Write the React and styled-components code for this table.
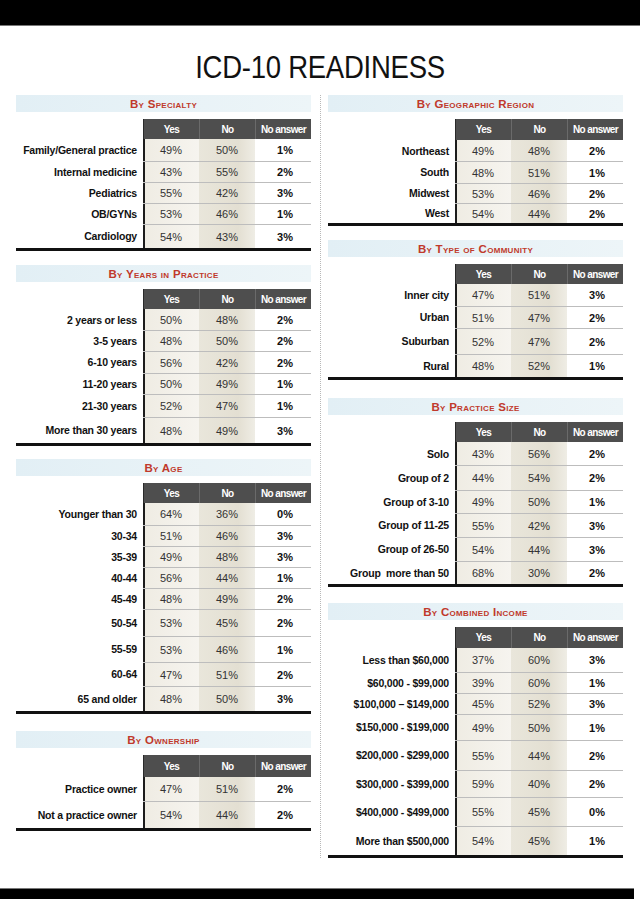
import styled, { createGlobalStyle } from 'styled-components'

const GlobalStyle = createGlobalStyle`
  body {
    margin: 0;
    background: #fff;
    font-family: "Liberation Sans", Arial, sans-serif;
  }
`

const Page = styled.div`
  width: 640px;
  height: 899px;
  display: flex;
  flex-direction: column;
  overflow: hidden;
`

const TopBar = styled.div`
  height: 25px;
  background: #000;
  border-bottom: 1px solid #777;
`

const Title = styled.h1`
  margin: 25px 0 12px;
  font-weight: 400;
  font-size: 32px;
  line-height: 32px;
  text-align: center;
  color: #111;
  letter-spacing: -0.3px;
  transform: scaleX(0.86);
`

const Columns = styled.div`
  display: flex;
  padding-left: 16px;
  align-items: stretch;
`

const Column = styled.div`
  width: 295px;
  display: flex;
  flex-direction: column;
`

const Divider = styled.div`
  width: 0;
  margin: 0 7px 0 9px;
  border-left: 1px dotted #b8b8b8;
`

const Section = styled.section`
  margin-top: ${p => p.$space}px;
`

const Band = styled.div`
  height: 17px;
  background: linear-gradient(to right, #e2eff5, #edf5f8);
  display: flex;
  align-items: center;
  justify-content: center;
  font-weight: 700;
  font-size: 11.5px;
  font-variant: small-caps;
  letter-spacing: 0.3px;
  color: #c0392b;
`

const Table = styled.div`
  margin-top: 7px;
  border-bottom: 3px solid #111;
`

const Row = styled.div`
  display: grid;
  grid-template-columns: 127px 56px 56px 56px;
  height: ${p => p.$h}px;
`

const Label = styled.div`
  display: flex;
  align-items: center;
  justify-content: flex-end;
  padding-right: 6px;
  font-weight: 700;
  font-size: 10.5px;
  letter-spacing: -0.2px;
  color: #111;
  white-space: pre;
`

const Head = styled.div`
  background: #4e4e4e;
  border-left: 1px solid ${p => (p.$first ? '#2a2a2a' : '#6a6a6a')};
  display: flex;
  align-items: center;
  justify-content: center;
  color: #fff;
  font-weight: 700;
  font-size: 10px;
  letter-spacing: -0.6px;
  white-space: nowrap;
`

const cellBg = {
  yes: 'linear-gradient(to right, #efece3, #f6f4ef)',
  no: 'linear-gradient(to right, #e9e6db, #e3dfd2 70%, #efede5)',
  na: '#fff'
}

const Cell = styled.div`
  display: flex;
  align-items: center;
  justify-content: center;
  background: ${p => cellBg[p.$kind]};
  border-top: ${p => (p.$sep ? '1px solid #bdbdbd' : '0')};
  box-shadow: ${p => (p.$kind === 'yes' ? 'inset 2px 0 0 #1c1c1c' : 'none')};
  font-size: 11px;
  font-weight: ${p => (p.$kind === 'na' ? 700 : 400)};
  color: ${p => (p.$kind === 'na' ? '#111' : '#333')};
  padding-left: ${p => (p.$kind === 'na' ? '4px' : '0')};
`

const BottomBar = styled.div`
  margin-top: auto;
  height: 10px;
  margin-right: 6px;
  background: #000;
  border-top: 1px solid #777;
`

const left = [
  {
    title: 'By Specialty', space: 0, head: 20,
    rows: [
      ['Family/General practice', '49%', '50%', '1%', 22],
      ['Internal medicine', '43%', '55%', '2%', 21],
      ['Pediatrics', '55%', '42%', '3%', 21],
      ['OB/GYNs', '53%', '46%', '1%', 21],
      ['Cardiology', '54%', '43%', '3%', 24]
    ]
  },
  {
    title: 'By Years in Practice', space: 14, head: 20,
    rows: [
      ['2 years or less', '50%', '48%', '2%', 21],
      ['3-5 years', '48%', '50%', '2%', 21],
      ['6-10 years', '56%', '42%', '2%', 22],
      ['11-20 years', '50%', '49%', '1%', 21],
      ['21-30 years', '52%', '47%', '1%', 23],
      ['More than 30 years', '48%', '49%', '3%', 26]
    ]
  },
  {
    title: 'By Age', space: 13, head: 20,
    rows: [
      ['Younger than 30', '64%', '36%', '0%', 22],
      ['30-34', '51%', '46%', '3%', 21],
      ['35-39', '49%', '48%', '3%', 21],
      ['40-44', '56%', '44%', '1%', 21],
      ['45-49', '48%', '49%', '2%', 21],
      ['50-54', '53%', '45%', '2%', 27],
      ['55-59', '53%', '46%', '1%', 26],
      ['60-64', '47%', '51%', '2%', 24],
      ['65 and older', '48%', '50%', '3%', 25]
    ]
  },
  {
    title: 'By Ownership', space: 17, head: 22,
    rows: [
      ['Practice owner', '47%', '51%', '2%', 24],
      ['Not a practice owner', '54%', '44%', '2%', 27]
    ]
  }
]

const right = [
  {
    title: 'By Geographic Region', space: 0, head: 21,
    rows: [
      ['Northeast', '49%', '48%', '2%', 21],
      ['South', '48%', '51%', '1%', 22],
      ['Midwest', '53%', '46%', '2%', 20],
      ['West', '54%', '44%', '2%', 20]
    ]
  },
  {
    title: 'By Type of Community', space: 14, head: 20,
    rows: [
      ['Inner city', '47%', '51%', '3%', 22],
      ['Urban', '51%', '47%', '2%', 22],
      ['Suburban', '52%', '47%', '2%', 26],
      ['Rural', '48%', '52%', '1%', 23]
    ]
  },
  {
    title: 'By Practice Size', space: 18, head: 20,
    rows: [
      ['Solo', '43%', '56%', '2%', 23],
      ['Group of 2', '44%', '54%', '2%', 25],
      ['Group of 3-10', '49%', '50%', '1%', 23],
      ['Group of 11-25', '55%', '42%', '3%', 24],
      ['Group of 26-50', '54%', '44%', '3%', 24],
      ['Group  more than 50', '68%', '30%', '2%', 23]
    ]
  },
  {
    title: 'By Combined Income', space: 16, head: 21,
    rows: [
      ['Less than $60,000', '37%', '60%', '3%', 24],
      ['$60,000 - $99,000', '39%', '60%', '1%', 21],
      ['$100,000 – $149,000', '45%', '52%', '3%', 21],
      ['$150,000 - $199,000', '49%', '50%', '1%', 26],
      ['$200,000 - $299,000', '55%', '44%', '2%', 30],
      ['$300,000 - $399,000', '59%', '40%', '2%', 27],
      ['$400,000 - $499,000', '55%', '45%', '0%', 29],
      ['More than $500,000', '54%', '45%', '1%', 29]
    ]
  }
]

const StatTable = ({ title, space, head, rows }) => (
  <Section $space={space}>
    <Band>{title}</Band>
    <Table>
      <Row $h={head}>
        <Label />
        <Head $first>Yes</Head>
        <Head>No</Head>
        <Head>No answer</Head>
      </Row>
      {rows.map(([label, yes, no, na, h], i) => (
        <Row key={label} $h={h}>
          <Label>{label}</Label>
          <Cell $kind="yes" $sep={i > 0}>{yes}</Cell>
          <Cell $kind="no" $sep={i > 0}>{no}</Cell>
          <Cell $kind="na" $sep={i > 0}>{na}</Cell>
        </Row>
      ))}
    </Table>
  </Section>
)

const App = () => (
  <Page>
    <GlobalStyle />
    <TopBar />
    <Title>ICD-10 READINESS</Title>
    <Columns>
      <Column>
        {left.map(s => <StatTable key={s.title} {...s} />)}
      </Column>
      <Divider />
      <Column>
        {right.map(s => <StatTable key={s.title} {...s} />)}
      </Column>
    </Columns>
    <BottomBar />
  </Page>
)

export default App
